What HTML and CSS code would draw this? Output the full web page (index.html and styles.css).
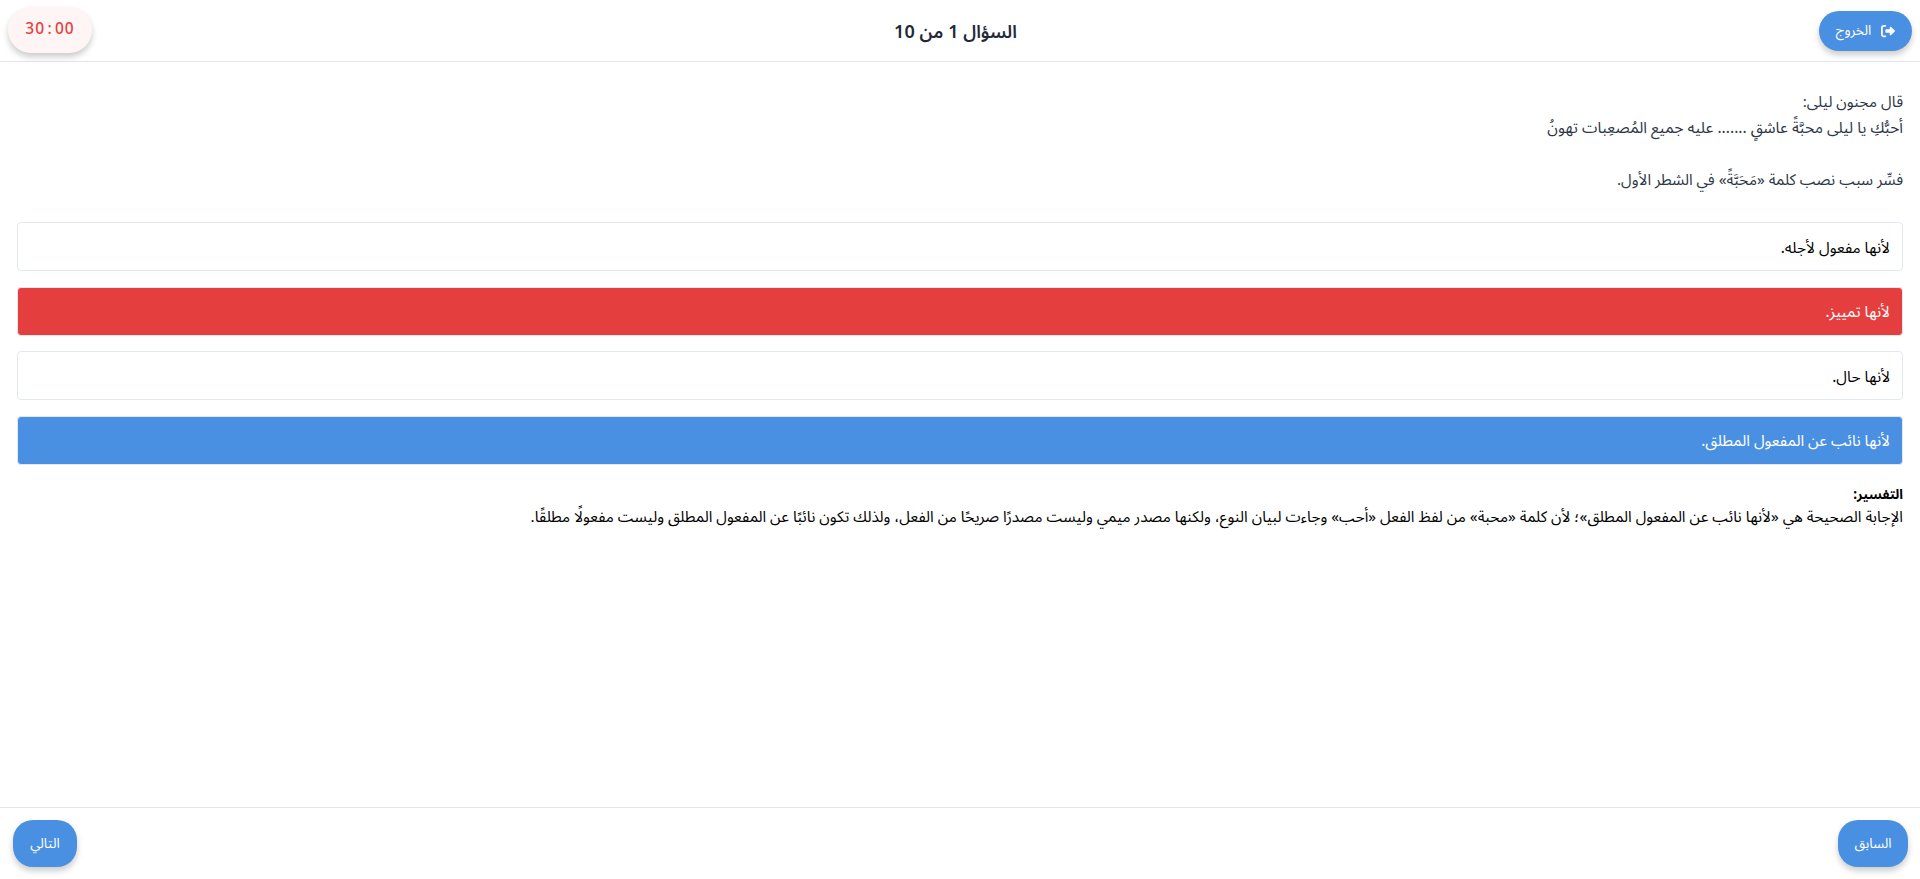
FILE: index.html
```html
<!DOCTYPE html>
<html lang="ar" dir="rtl">
<head>
<meta charset="utf-8">
<title>السؤال 1 من 10</title>
<link rel="stylesheet" href="styles.css">
</head>
<body>
<header class="header">
  <button class="btn exit"><svg class="exit-icon" viewBox="0 0 512 512"><path fill="currentColor" d="M160 96c17.700 0 32-14.300 32-32s-14.300-32-32-32H96C43 32 0 75 0 128v256c0 53 43 96 96 96h64c17.700 0 32-14.300 32-32s-14.300-32-32-32H96c-17.700 0-32-14.300-32-32V128c0-17.700 14.300-32 32-32h64zM504.500 273.400c4.800-4.500 7.500-10.800 7.500-17.400s-2.700-12.900-7.500-17.400l-144-136c-7-6.600-17.200-8.400-26-4.600S320 110.400 320 120v72H192c-17.700 0-32 14.300-32 32v64c0 17.700 14.300 32 32 32h128v72c0 9.600 5.700 18.200 14.500 22s19 2 26-4.600l144-136z"/></svg><span>الخروج</span></button>
  <h1 class="title">السؤال 1 من 10</h1>
  <div class="timer" dir="ltr">30<span class="colon">:</span>00</div>
</header>
<main class="content">
  <div class="question">
    <p class="line intro">قال مجنون ليلى:</p>
    <p class="line verse">أحبُّكِ يا ليلى محبَّةً عاشقٍ ....... عليه جميع المُصعِبات تهونُ</p>
    <p class="line ask">فسِّر سبب نصب كلمة «مَحَبَّةً» في الشطر الأول.</p>
  </div>
  <div class="options">
    <div class="option"><span>لأنها مفعول لأجله.</span></div>
    <div class="option wrong"><span>لأنها تمييز.</span></div>
    <div class="option"><span>لأنها حال.</span></div>
    <div class="option correct"><span>لأنها نائب عن المفعول المطلق.</span></div>
  </div>
  <section class="explanation">
    <strong class="label">التفسير:</strong>
    <p class="reason">الإجابة الصحيحة هي «لأنها نائب عن المفعول المطلق»؛ لأن كلمة «محبة» من لفظ الفعل «أحب» وجاءت لبيان النوع، ولكنها مصدر ميمي وليست مصدرًا صريحًا من الفعل، ولذلك تكون نائبًا عن المفعول المطلق وليست مفعولًا مطلقًا.</p>
  </section>
</main>
<footer class="footer">
  <button class="btn prev">السابق</button>
  <button class="btn next">التالي</button>
</footer>
</body>
</html>
```
FILE: styles.css
```css
* { box-sizing: border-box; margin: 0; }
body {
  height: 100vh;
  display: flex;
  flex-direction: column;
  overflow: hidden;
  background: #fff;
  color: #000;
  font-family: "Noto Sans", "Noto Sans Arabic", "DejaVu Sans", sans-serif;
  font-size: 16px;
  white-space: nowrap;
}
.header {
  height: 62px;
  flex: none;
  display: flex;
  align-items: center;
  justify-content: space-between;
  padding: 0 8px;
  border-bottom: 1px solid #e2e3f0;
}
.btn {
  border: 0;
  padding: 0;
  background: #4a90e2;
  color: #fff;
  font-family: inherit;
  font-size: 13.6px;
  box-shadow: 0 4px 6px rgba(0, 0, 0, .2);
}
.exit {
  width: 93px;
  height: 40px;
  border-radius: 20px;
  display: flex;
  align-items: center;
  justify-content: center;
  gap: 10px;
}
.exit-icon { width: 14px; height: 14px; }
.title { font-size: 18px; font-weight: 600; line-height: 28px; color: #1f2937; }
.timer {
  width: 84px;
  height: 46px;
  margin-bottom: 1px;
  border-radius: 23px;
  background: #fff5f5;
  color: #e53e3e;
  font-size: 15.5px;
  font-weight: 500;
  letter-spacing: 1px;
  line-height: 42px;
  text-align: center;
  box-shadow: 0 4px 6px rgba(0, 0, 0, .2);
}
.colon { display: inline-block; width: 10px; text-align: center; }
.content { flex: 1; padding: 26px 17px 0; }
.question { height: 134px; color: #2d3748; }
.line { line-height: 26px; }
.intro { font-size: 15.3px; }
.verse { font-size: 15.6px; }
.ask { margin-top: 26px; font-size: 15.3px; }
.options { display: flex; flex-direction: column; gap: 15.5px; }
.option {
  height: 49px;
  padding: 2px 12px 0;
  display: flex;
  align-items: center;
  border: 1px solid #e2e8f0;
  border-radius: 4px;
  font-size: 15.4px;
}
.wrong { background: #e53e3e; color: #fff; }
.correct { background: #4a90e2; color: #fff; }
.explanation { padding-top: 17.5px; line-height: 23px; font-size: 15.3px; }
.label { display: block; font-size: 13.6px; }
.footer {
  height: 72px;
  flex: none;
  display: flex;
  justify-content: space-between;
  align-items: flex-start;
  padding: 12px 12px 0 13px;
  border-top: 1px solid #e2e4e8;
}
.prev, .next { height: 47px; border-radius: 20px; }
.prev { width: 70px; }
.next { width: 64px; }
```
